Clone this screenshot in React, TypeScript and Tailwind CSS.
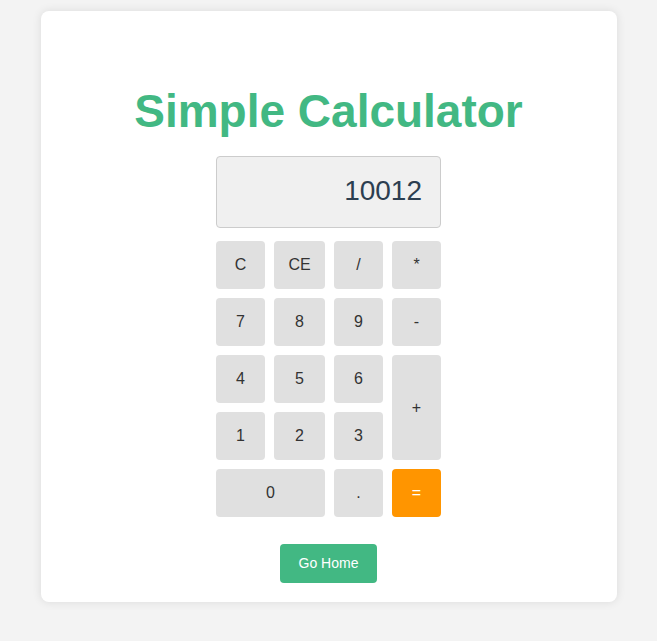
import React from "react";

const Btn = ({ label, className = "" }: { label: string; className?: string }) => (
  <button className={`flex items-center justify-center rounded-[4px] bg-[#e0e0e0] text-[16px] text-[#333] ${className}`}>
    {label}
  </button>
);

export default function App() {
  return (
    <div className="min-h-[641px] bg-[#f3f3f3] pt-[11px] font-['Liberation_Sans',Arial,sans-serif]">
      <div className="mx-auto flex h-[591px] w-[576px] flex-col items-center rounded-[8px] bg-white shadow-[0_0_10px_rgba(0,0,0,0.1)]">
        <h1 className="mt-[73px] text-[46px] font-bold leading-[55px] text-[#42b883]">Simple Calculator</h1>
        <div className="mt-[17px] flex h-[72px] w-[225px] items-center justify-end rounded-[4px] border border-[#ccc] bg-[#f0f0f0] pr-[18px] pb-[2px] text-[28px] text-[#2c3e50]">
          10012
        </div>
        <div className="mt-[13px] grid w-[225px] grid-cols-[49px_51px_49px_49px] grid-rows-[48px_48px_48px_48px_48px] gap-[9px]">
          <Btn label="C" />
          <Btn label="CE" />
          <Btn label="/" />
          <Btn label="*" />
          <Btn label="7" />
          <Btn label="8" />
          <Btn label="9" />
          <Btn label="-" />
          <Btn label="4" />
          <Btn label="5" />
          <Btn label="6" />
          <Btn label="+" className="row-span-2" />
          <Btn label="1" />
          <Btn label="2" />
          <Btn label="3" />
          <Btn label="0" className="col-span-2" />
          <Btn label="." />
          <button className="flex items-center justify-center rounded-[4px] bg-[#ff9500] text-[16px] text-white">=</button>
        </div>
        <button className="mt-[27px] flex h-[39px] w-[97px] items-center justify-center rounded-[4px] bg-[#42b883] text-[14px] text-white">
          Go Home
        </button>
      </div>
    </div>
  );
}
